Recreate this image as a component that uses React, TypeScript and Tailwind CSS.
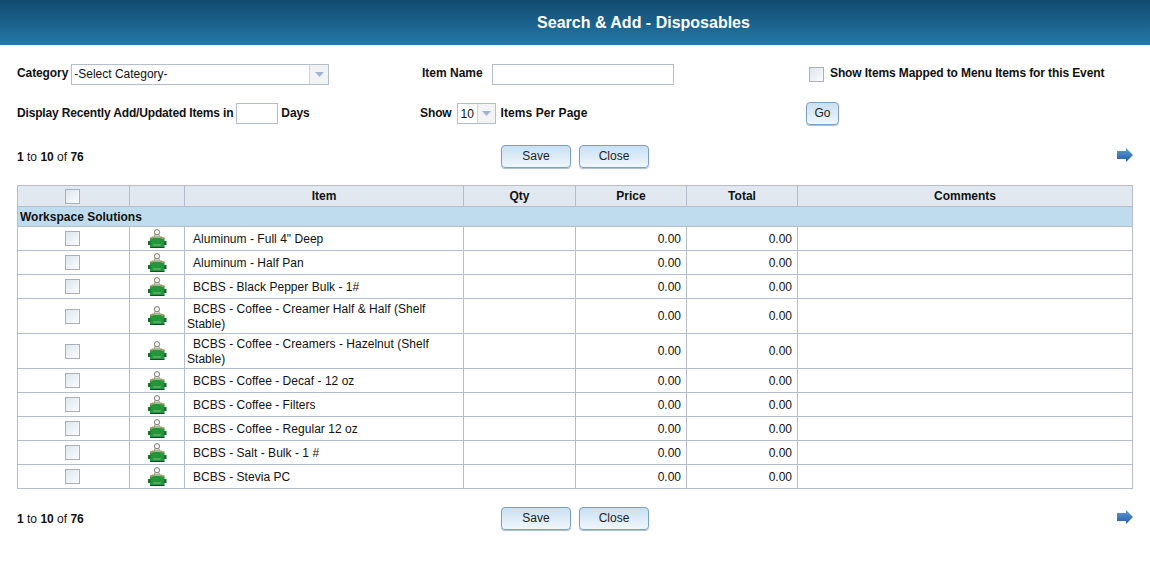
import React from "react";

const rows = [
  { name: "Aluminum - Full 4\" Deep" },
  { name: "Aluminum - Half Pan" },
  { name: "BCBS - Black Pepper Bulk - 1#" },
  { name: "BCBS - Coffee - Creamer Half & Half (Shelf Stable)", tall: true },
  { name: "BCBS - Coffee - Creamers - Hazelnut (Shelf Stable)", tall: true },
  { name: "BCBS - Coffee - Decaf - 12 oz" },
  { name: "BCBS - Coffee - Filters" },
  { name: "BCBS - Coffee - Regular 12 oz" },
  { name: "BCBS - Salt - Bulk - 1 #" },
  { name: "BCBS - Stevia PC" },
];

const inputStyle = "h-[21px] border border-[#b4bccd] bg-white";
const buttonStyle =
  "h-[23px] rounded-[4px] border border-[#7ba0c4] bg-gradient-to-b from-[#c9dff2] to-[#f0f7fd] pb-[2px] text-[12px] text-[#222] shadow-[0_1px_1px_rgba(90,120,150,0.5)]";
const thStyle = "border border-[#b4bccd] text-center font-bold";
const tdStyle = "border border-[#b4bccd]";

const Check = ({ className = "" }: { className?: string }) => (
  <span
    className={`inline-block h-[15px] w-[15px] border border-[#aab0ba] bg-gradient-to-br from-[#dfe6ef] to-[#fafcfe] align-middle ${className}`}
  />
);

const DropArrow = ({ w }: { w: string }) => (
  <span className={`flex h-full ${w} items-center justify-center border-l border-[#cfd5df] bg-[#f2f3f5]`}>
    <svg width="9" height="5" viewBox="0 0 9 5">
      <path d="M0 0h9L4.5 5z" fill="#a3b3cf" />
    </svg>
  </span>
);

const BagIcon = () => (
  <svg width="20" height="20" viewBox="0 0 20 20" className="inline-block align-middle">
    <circle cx="10" cy="3.2" r="2.6" fill="#f6f6f6" stroke="#7d7d72" />
    <rect x="7.5" y="5.8" width="5" height="2" fill="#d8d8ce" stroke="#7d7d72" strokeWidth="0.5" />
    <rect x="3" y="8.5" width="14.5" height="10" fill="#23953b" />
    <path d="M3 10.5L5 7.5h3L6 9.5zM17.5 10.5L15 7.5h-3l2 2z" fill="#b8935a" />
    <rect x="1" y="12" width="2.5" height="4" fill="#176b2b" />
    <rect x="17" y="12" width="2.5" height="4" fill="#176b2b" />
    <rect x="6" y="15.5" width="8" height="1" fill="#79c489" />
    <rect x="3" y="18" width="14.5" height="1" fill="#10502a" />
  </svg>
);

const NextArrow = () => (
  <svg width="16" height="14" viewBox="0 0 16 14" className="mb-[3px]">
    <defs>
      <linearGradient id="arrowFill" x1="0" y1="0" x2="0" y2="1">
        <stop offset="0" stopColor="#5f9ad6" />
        <stop offset="1" stopColor="#1f5ea8" />
      </linearGradient>
    </defs>
    <path d="M0 3h9V0l7 7-7 7v-3H0z" fill="url(#arrowFill)" />
  </svg>
);

const Pager = () => (
  <div className="grid grid-cols-[1fr_auto_1fr] items-center px-[17px]">
    <span>
      <b>1</b> to <b>10</b> of <b>76</b>
    </span>
    <div className="flex gap-2">
      <button className={`${buttonStyle} w-[70px]`}>Save</button>
      <button className={`${buttonStyle} w-[70px]`}>Close</button>
    </div>
    <div className="flex justify-end">
      <NextArrow />
    </div>
  </div>
);

export default function App() {
  return (
    <div className="h-[580px] w-[1150px] overflow-hidden bg-white font-['Liberation_Sans',Arial,sans-serif] text-[12px] text-[#111]">
      <header className="flex h-[45px] items-center justify-center bg-gradient-to-b from-[#114a6f] to-[#2579a9] pl-[137px] text-[16px] font-bold text-white">
        Search &amp; Add - Disposables
      </header>

      <section className="mt-[19px] grid grid-cols-[403px_386px_1fr] gap-y-[17px] pl-[17px] font-bold">
        <div className="flex h-[21px] items-start">
          <span className="mr-[3px] tracking-[-0.1px]">Category</span>
          <div className={`${inputStyle} flex w-[258px] items-center justify-between font-normal`}>
            <span className="pb-[1px] pl-[2px]">-Select Category-</span>
            <DropArrow w="w-[19px]" />
          </div>
        </div>
        <div className="flex h-[21px] items-start pl-[2px]">
          <span className="w-[70px]">Item Name</span>
          <div className={`${inputStyle} w-[182px]`} />
        </div>
        <div className="flex h-[21px] items-start pl-[3px]">
          <Check className="mt-[3px]" />
          <span className="ml-[6px] tracking-[-0.11px]">Show Items Mapped to Menu Items for this Event</span>
        </div>

        <div className="flex h-[23px] items-center">
          <span className="mr-[3px] pb-[1px] tracking-[-0.16px]">Display Recently Add/Updated Items in</span>
          <div className={`${inputStyle} w-[42px]`} />
          <span className="ml-[3px] pb-[1px] tracking-[-0.1px]">Days</span>
        </div>
        <div className="flex h-[23px] items-center">
          <span className="mr-[5px] pb-[1px] tracking-[-0.1px]">Show</span>
          <div className={`${inputStyle} flex w-[39px] items-center justify-between font-normal`}>
            <span className="pl-[3px]">10</span>
            <DropArrow w="w-[18px]" />
          </div>
          <span className="ml-[5px] pb-[1px] tracking-[0.06px]">Items Per Page</span>
        </div>
        <div className="flex h-[23px] items-center">
          <button className={`${buttonStyle} w-[33px] font-normal`}>Go</button>
        </div>
      </section>

      <div className="mt-[20px]">
        <Pager />
      </div>

      <div className="mt-[17px] px-[17px]">
        <table className="w-[1116px] table-fixed border-collapse leading-[15px]">
          <colgroup>
            <col className="w-[112px]" />
            <col className="w-[55px]" />
            <col className="w-[279px]" />
            <col className="w-[112px]" />
            <col className="w-[111px]" />
            <col className="w-[111px]" />
            <col />
          </colgroup>
          <thead>
            <tr className="h-[21px] bg-[#e1e8f0]">
              <th className={thStyle}>
                <Check className="mr-[2px]" />
              </th>
              <th className={thStyle} />
              <th className={thStyle}>Item</th>
              <th className={thStyle}>Qty</th>
              <th className={thStyle}>Price</th>
              <th className={thStyle}>Total</th>
              <th className={thStyle}>Comments</th>
            </tr>
          </thead>
          <tbody>
            <tr className="h-[20px] bg-[#bedcee]">
              <td colSpan={7} className={`${tdStyle} pl-[2px] pt-[1px] font-bold`}>
                Workspace Solutions
              </td>
            </tr>
            {rows.map((item, index) => (
              <tr key={index} className={item.tall ? "h-[35px]" : "h-[24px]"}>
                <td className={`${tdStyle} text-center`}>
                  <Check className="mr-[2px]" />
                </td>
                <td className={`${tdStyle} text-center`}>
                  <BagIcon />
                </td>
                <td className={`${tdStyle} px-[2px] pt-[1px] indent-[6px] tracking-[0.03px]`}>{item.name}</td>
                <td className={tdStyle} />
                <td className={`${tdStyle} pr-[5px] pt-[1px] text-right`}>0.00</td>
                <td className={`${tdStyle} pr-[5px] pt-[1px] text-right`}>0.00</td>
                <td className={tdStyle} />
              </tr>
            ))}
          </tbody>
        </table>
      </div>

      <div className="mt-[18px]">
        <Pager />
      </div>
    </div>
  );
}
